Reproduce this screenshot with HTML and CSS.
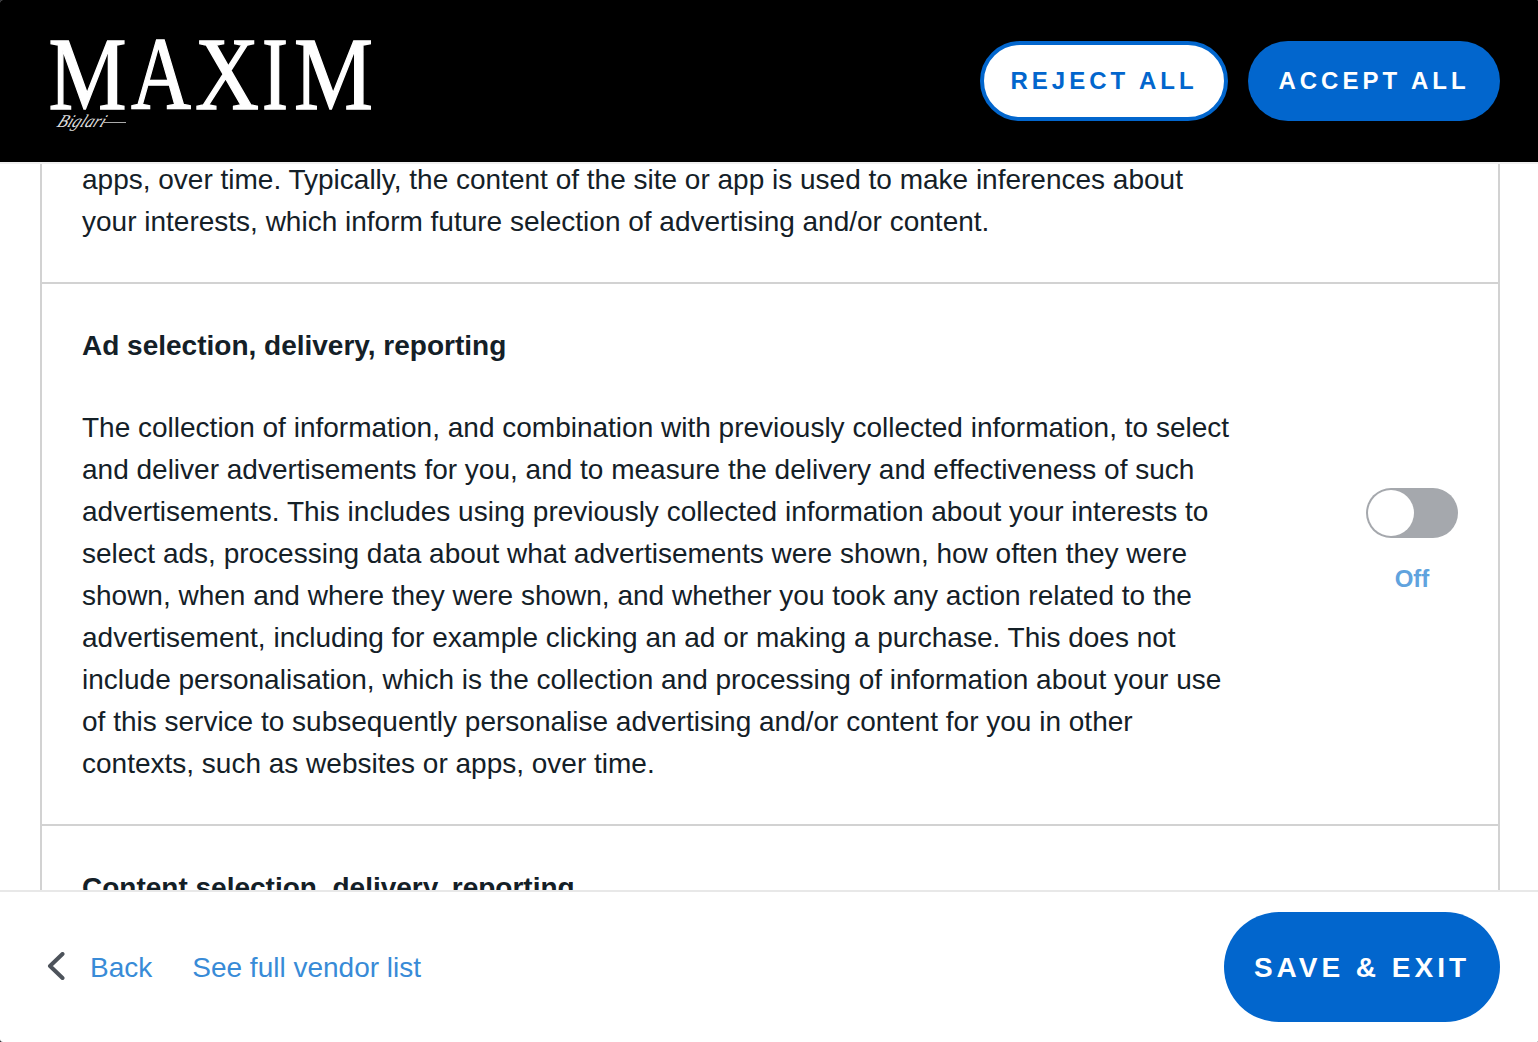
FILE: index.html
```html
<!DOCTYPE html>
<html lang="en">
<head>
<meta charset="utf-8">
<title>Privacy settings</title>
<link rel="stylesheet" href="styles.css">
</head>
<body>
<div class="dialog">
  <header class="header">
    <svg class="logo" width="340" height="110" viewBox="0 0 340 110" role="img" aria-label="Maxim">
      <g class="wordmark">
        <text x="8.500" y="81" textLength="78" lengthAdjust="spacingAndGlyphs">M</text>
        <text x="91" y="81" textLength="60" lengthAdjust="spacingAndGlyphs">A</text>
        <text x="155" y="81" textLength="64" lengthAdjust="spacingAndGlyphs">X</text>
        <text x="222" y="81" textLength="26" lengthAdjust="spacingAndGlyphs">I</text>
        <text x="254" y="81" textLength="79" lengthAdjust="spacingAndGlyphs">M</text>
      </g>
      <g transform="translate(16 99) skewX(-25)">
        <text class="signature" textLength="47" lengthAdjust="spacingAndGlyphs">Biglari</text>
      </g>
      <path class="flourish" d="M64 94.500 L86 94.500"/>
    </svg>
    <div class="actions">
      <button class="button button-outline">REJECT ALL</button>
      <button class="button button-accept">ACCEPT ALL</button>
    </div>
  </header>
  <main class="content">
    <div class="list">
      <section class="row row-first">
        <p class="text">apps, over time. Typically, the content of the site or app is used to make inferences about<br>your interests, which inform future selection of advertising and/or content.</p>
      </section>
      <section class="row">
        <div class="text">
          <h2>Ad selection, delivery, reporting</h2>
          <p>The collection of information, and combination with previously collected information, to select<br>and deliver advertisements for you, and to measure the delivery and effectiveness of such<br>advertisements. This includes using previously collected information about your interests to<br>select ads, processing data about what advertisements were shown, how often they were<br>shown, when and where they were shown, and whether you took any action related to the<br>advertisement, including for example clicking an ad or making a purchase. This does not<br>include personalisation, which is the collection and processing of information about your use<br>of this service to subsequently personalise advertising and/or content for you in other<br>contexts, such as websites or apps, over time.</p>
        </div>
        <div class="choice">
          <div class="toggle" role="switch" aria-checked="false"><span class="knob"></span></div>
          <span class="state">Off</span>
        </div>
      </section>
      <section class="row">
        <div class="text"><h2>Content selection, delivery, reporting</h2></div>
      </section>
    </div>
  </main>
  <footer class="footer">
    <nav class="links">
      <a class="back"><svg width="20" height="32" viewBox="0 0 20 32"><path d="M16.500 2 L4 14 L16.500 26"/></svg>Back</a>
      <a>See full vendor list</a>
    </nav>
    <button class="button button-save">SAVE &amp; EXIT</button>
  </footer>
</div>
</body>
</html>
```
FILE: styles.css
```css
* { box-sizing: border-box; }
html { background: #24262c; }
body {
  margin: 0;
  font-family: "Liberation Sans", Arial, sans-serif;
  font-size: 28px;
  line-height: 42px;
  color: #142027;
}
.dialog {
  height: 1042px;
  display: flex;
  flex-direction: column;
  overflow: hidden;
  background: #fff;
  border-radius: 3px 1px 1px 3px;
}
.header {
  flex: none;
  height: 164px;
  padding: 0 38px 0 40px;
  display: flex;
  align-items: center;
  justify-content: space-between;
  background: #000;
  border-bottom: 2px solid #efefef;
}
.logo { display: block; margin-top: 4px; overflow: visible; }
.wordmark {
  font-family: "Liberation Serif", serif;
  font-size: 104px;
  fill: #fff;
  stroke: #fff;
  stroke-width: 1.4px;
}
.signature {
  font-family: "Liberation Serif", serif;
  font-style: italic;
  font-size: 18px;
  fill: #ddd;
}
.flourish { stroke: #aaa; stroke-width: 1; fill: none; }
.actions { display: flex; gap: 20px; }
.button {
  border: 0;
  padding: 0;
  height: 80px;
  border-radius: 40px;
  font-family: inherit;
  font-size: 24px;
  font-weight: 700;
  letter-spacing: 4px;
  white-space: nowrap;
  color: #fff;
  background: #0266cd;
}
.button-outline {
  width: 248px;
  color: #0266cd;
  background: #fff;
  border: 4px solid #0266cd;
}
.button-accept { width: 252px; }
.button-save {
  width: 276px;
  height: 110px;
  padding-top: 2px;
  border-radius: 55px;
  font-size: 28px;
}
.content {
  flex: 1;
  min-height: 0;
  overflow: hidden;
  padding: 0 38px 0 40px;
}
.list {
  border: solid #d2d2d2;
  border-width: 0 2px;
}
.row {
  display: flex;
  align-items: center;
  justify-content: space-between;
  padding: 41px 40px 39px;
  border-bottom: 2px solid #d2d2d2;
}
.row-first { padding-top: 0; margin-top: -5px; }
.text { white-space: nowrap; }
h2, p { margin: 0; font-size: inherit; }
h2 + p { margin-top: 40px; }
.choice {
  display: flex;
  flex-direction: column;
  align-items: center;
  gap: 20px;
  padding-bottom: 22px;
}
.toggle {
  width: 92px;
  height: 50px;
  padding: 2px;
  border-radius: 25px;
  background: #a5a8ad;
}
.knob {
  display: block;
  width: 46px;
  height: 46px;
  border-radius: 50%;
  background: #fff;
}
.state { font-size: 24px; font-weight: 700; color: #60a3de; }
.footer {
  flex: none;
  height: 152px;
  padding: 0 38px 0 46px;
  display: flex;
  align-items: center;
  justify-content: space-between;
  border-top: 2px solid #e8e8e8;
}
.links { display: flex; gap: 40px; padding-top: 2px; color: #388bd7; }
.back { display: flex; align-items: center; gap: 24px; }
.back svg {
  fill: none;
  stroke: #4d535b;
  stroke-width: 4;
  stroke-linecap: round;
  stroke-linejoin: round;
}
```
